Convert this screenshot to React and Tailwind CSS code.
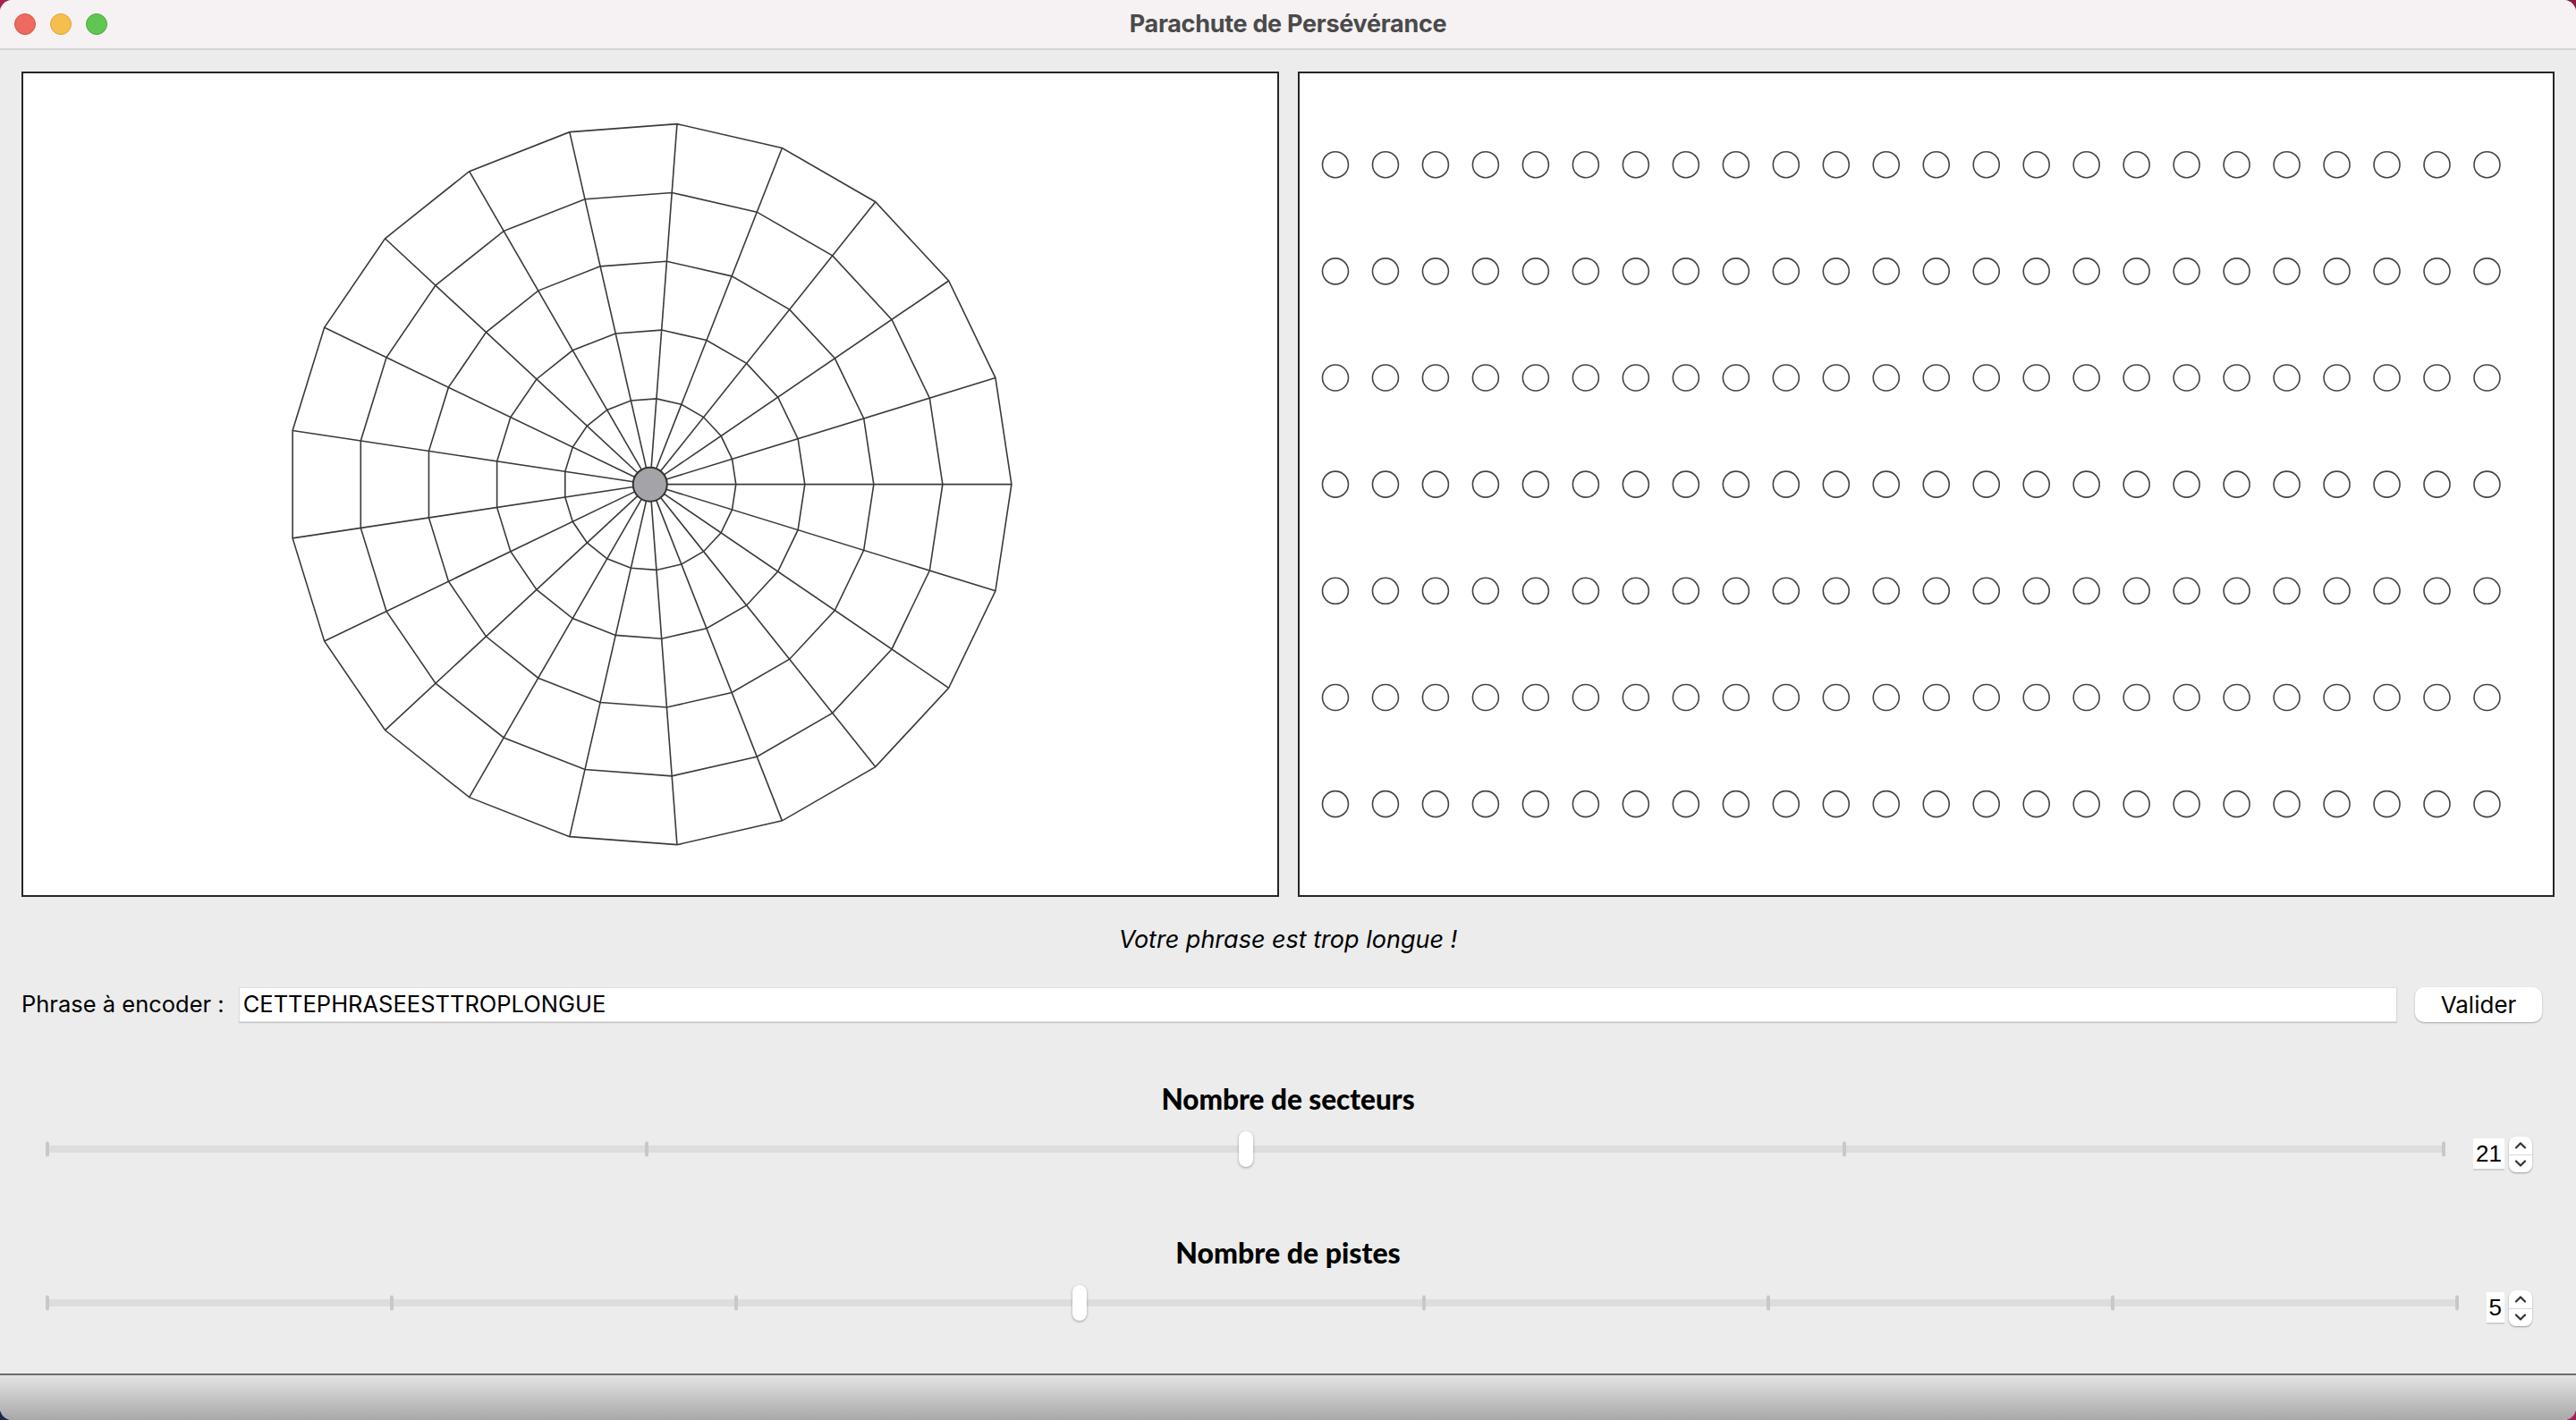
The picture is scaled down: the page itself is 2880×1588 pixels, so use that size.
import React from "react";

const SECTORS = 21;
const RINGS = 5;
const COLS = 24;
const ROWS = 7;

const ui = { fontFamily: "Inter, 'Noto Sans', sans-serif" };
const heading = { fontFamily: "Lato, 'Noto Sans', sans-serif" };

// parachute drawing: spokes from the hub + polygonal rings
const PolarView = () => {
  const w = 1401;
  const h = 919;
  const cx = w / 2;
  const cy = h / 2;
  const hub = 19;
  const step = 77;
  const angles = Array.from({ length: SECTORS }, (_, k) => (k * 2 * Math.PI) / SECTORS);
  const rings = Array.from({ length: RINGS }, (_, i) => hub + step * (i + 1));
  const pt = (r, a) => [cx + r * Math.cos(a), cy - r * Math.sin(a)];

  return (
    <svg viewBox={`0 0 ${w} ${h}`} className="block w-full h-full">
      {angles.map((a, k) => {
        const [x1, y1] = pt(hub, a);
        const [x2, y2] = pt(rings[RINGS - 1], a);
        return <line key={k} x1={x1} y1={y1} x2={x2} y2={y2} stroke="#3a3a3a" strokeWidth="1.6" />;
      })}
      {rings.map((r) => (
        <polygon
          key={r}
          points={angles.map((a) => pt(r, a).join(",")).join(" ")}
          fill="none"
          stroke="#3a3a3a"
          strokeWidth="1.6"
        />
      ))}
      <circle cx={cx} cy={cy} r={hub} fill="#a4a4a8" stroke="#333" strokeWidth="2" />
    </svg>
  );
};

const DotsView = () => {
  const w = 1402;
  const h = 919;
  return (
    <svg viewBox={`0 0 ${w} ${h}`} className="block w-full h-full">
      {Array.from({ length: ROWS }).map((_, r) =>
        Array.from({ length: COLS }).map((_, c) => (
          <circle
            key={`${r}-${c}`}
            cx={40 + c * 56}
            cy={h / 2 + (r - 3) * 119.2}
            r="14.5"
            fill="none"
            stroke="#444"
            strokeWidth="1.6"
          />
        ))
      )}
    </svg>
  );
};

const Stepper = () => (
  <div className="w-[26px] h-[40px] rounded-[8px] bg-white shadow-[0_1px_2px_rgba(0,0,0,0.35)] flex flex-col">
    <div className="flex-1 flex items-center justify-center border-b border-[#dadada]">
      <svg width="14" height="9" viewBox="0 0 14 9">
        <path d="M2 7.5 L7 2.5 L12 7.5" fill="none" stroke="#333" strokeWidth="2.2" strokeLinecap="round" strokeLinejoin="round" />
      </svg>
    </div>
    <div className="flex-1 flex items-center justify-center">
      <svg width="14" height="9" viewBox="0 0 14 9">
        <path d="M2 1.5 L7 6.5 L12 1.5" fill="none" stroke="#333" strokeWidth="2.2" strokeLinecap="round" strokeLinejoin="round" />
      </svg>
    </div>
  </div>
);

const Slider = ({ ticks, index, value }) => (
  <div className="flex items-center h-[40px] pl-[29px] pr-[25px]">
    <div className="relative flex-1 h-[8px] rounded-full bg-[#dddddd]">
      {Array.from({ length: ticks }).map((_, i) => (
        <div
          key={i}
          className="absolute top-1/2 -translate-y-1/2 -ml-[2px] w-[4px] h-[17px] rounded-full bg-[#c8c8c8]"
          style={{ left: `${(i / (ticks - 1)) * 100}%` }}
        />
      ))}
      <div
        className="absolute top-1/2 -translate-y-1/2 -ml-[8px] w-[16px] h-[40px] rounded-full bg-white shadow-[0_1px_3px_rgba(0,0,0,0.35)]"
        style={{ left: `${(index / (ticks - 1)) * 100}%` }}
      />
    </div>
    <div className="ml-[33px] mt-[12px] flex items-center gap-[5px]">
      <div className="h-[36px] px-[3px] bg-white border-b-2 border-[#d0d0d0] flex items-center text-[26px] text-black leading-none" style={{ fontFamily: "'Liberation Sans', Arial, sans-serif" }}>
        {value}
      </div>
      <Stepper />
    </div>
  </div>
);

export default function App() {
  return (
    <div className="w-[2880px] h-[1588px] bg-[linear-gradient(to_top_right,#1c2a4c,#a8285a_35%,#8a1a40)] overflow-hidden">
      <div className="w-full h-full rounded-[14px] overflow-hidden flex flex-col bg-[#ececec]" style={ui}>
        {/* title bar */}
        <div className="h-[56px] shrink-0 grid grid-cols-[1fr_auto_1fr] items-center bg-[#f6f2f3] border-b-2 border-[#d6d3d4]">
          <div className="flex items-center gap-[16px] pl-[16px]">
            <span className="w-[24px] h-[24px] rounded-full bg-[#ee6a5f] border border-[#d65247]" />
            <span className="w-[24px] h-[24px] rounded-full bg-[#f5bf4f] border border-[#d9a33d]" />
            <span className="w-[24px] h-[24px] rounded-full bg-[#61c554] border border-[#4ca93f]" />
          </div>
          <div className="text-[27px] font-bold text-[#4b4a4b] tracking-[-0.3px]">Parachute de Persévérance</div>
          <div />
        </div>

        <div className="flex-1 flex flex-col px-[24px] pt-[24px]">
          {/* drawing panels */}
          <div className="grid grid-cols-2 gap-[21px] h-[923px] shrink-0">
            <div className="border-2 border-[#262626] bg-white">
              <PolarView />
            </div>
            <div className="border-2 border-[#262626] bg-white">
              <DotsView />
            </div>
          </div>

          <div className="mt-[31px] h-[34px] leading-[34px] text-center italic text-[27px] text-black">
            Votre phrase est trop longue !
          </div>

          <div className="mt-[35px] h-[40px] flex items-center pr-[14px]">
            <span className="text-[25.5px] text-black whitespace-nowrap">Phrase à encoder :</span>
            <div className="ml-[16px] flex-1 h-[39px] bg-white border border-[#dcdcdc] shadow-[0_1px_1px_rgba(0,0,0,0.15)] flex items-center pl-[4px] text-[25.5px] text-black">
              CETTEPHRASEESTTROPLONGUE
            </div>
            <button className="ml-[20px] w-[142px] h-[39px] rounded-[10px] bg-white shadow-[0_1px_2px_rgba(0,0,0,0.3)] text-[26px] text-black">
              Valider
            </button>
          </div>

          <div className="mt-[68px] h-[36px] leading-[36px] text-center text-[31.5px] font-black text-black" style={heading}>
            Nombre de secteurs
          </div>
          <div className="mt-[18px]">
            <Slider ticks={5} index={2} value="21" />
          </div>

          <div className="mt-[78px] h-[36px] leading-[36px] text-center text-[32px] font-black text-black" style={heading}>
            Nombre de pistes
          </div>
          <div className="mt-[18px]">
            <Slider ticks={8} index={3} value="5" />
          </div>
          <div className="flex-1" />
        </div>

        <div className="h-[52px] shrink-0 border-t-2 border-[#6b6b6b] bg-[linear-gradient(to_bottom,#e4e4e4,#a8a8a8)]" />
      </div>
    </div>
  );
}
